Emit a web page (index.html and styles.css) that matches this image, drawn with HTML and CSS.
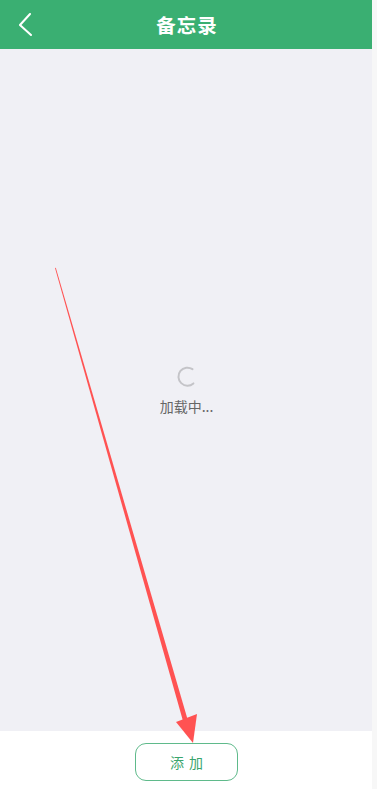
FILE: index.html
```html
<!DOCTYPE html>
<html lang="zh">
<head>
<meta charset="utf-8">
<link rel="stylesheet" href="styles.css">
</head>
<body>
<div class="screen">
  <div class="app">
    <header class="header">
      <svg class="back" width="20" height="28" viewBox="0 0 20 28"><polyline points="11,1 1,12 12,22" fill="none" stroke="#fff" stroke-width="2" stroke-linecap="round" stroke-linejoin="miter"/></svg>
      <h1 class="title">备忘录</h1>
    </header>
    <main class="content">
      <div class="loading">
        <svg class="spinner" width="22" height="22" viewBox="0 0 22 22"><path d="M16.5 3.2 A9 9 0 1 0 17.4 17.4" fill="none" stroke="#c4c4c8" stroke-width="2" stroke-linecap="round"/></svg>
        <div class="loading-text">加载中...</div>
      </div>
    </main>
    <footer class="footer">
      <button class="add-btn">添 加</button>
    </footer>
  </div>
  <div class="strip"></div>
</div>
<svg class="arrow" width="377" height="789" viewBox="0 0 377 789">
  <polygon points="55,268 55.8,267.8 187.5,719 183,721" fill="#ff5252"/>
  <polygon points="176,722 197,714 193,743" fill="#ff5252"/>
</svg>
</body>
</html>
```
FILE: styles.css
```css
html, body {
  margin: 0;
  padding: 0;
}
body {
  width: 377px;
  height: 789px;
  overflow: hidden;
  font-family: "Noto Sans CJK SC", "Noto Sans", sans-serif;
  position: relative;
}
.screen {
  display: flex;
  height: 789px;
}
.app {
  width: 372px;
  display: flex;
  flex-direction: column;
}
.strip {
  flex: 1;
  background: #f7f7f7;
}
.header {
  height: 49px;
  background: #3aaf72;
  display: flex;
  align-items: center;
  justify-content: center;
  position: relative;
}
.back {
  position: absolute;
  left: 19px;
  top: 13px;
}
.title {
  margin: 0;
  color: #fff;
  font-size: 19.5px;
  font-weight: 700;
  letter-spacing: 1px;
  padding-left: 2px;
}
.content {
  flex: 1;
  background: #f0f0f5;
  display: flex;
  align-items: center;
  justify-content: center;
}
.loading {
  display: flex;
  flex-direction: column;
  align-items: center;
  margin-left: 1px;
  margin-top: 2px;
}
.spinner {
  display: block;
}
.loading-text {
  margin-top: 8px;
  font-size: 14px;
  color: #666;
  line-height: 20px;
}
.footer {
  height: 58px;
  background: #fff;
  display: flex;
  justify-content: center;
  align-items: flex-start;
  padding-top: 12px;
  box-sizing: border-box;
}
.add-btn {
  width: 103px;
  height: 38px;
  border: 1px solid #5fba8b;
  border-radius: 11px;
  background: #fff;
  color: #3aa56c;
  font-family: "Noto Sans CJK SC", "Noto Sans", sans-serif;
  font-size: 14px;
  letter-spacing: 1px;
  padding: 0 0 0 1px;
  margin-left: 1px;
}
.arrow {
  position: absolute;
  left: 0;
  top: 0;
  pointer-events: none;
}
```
